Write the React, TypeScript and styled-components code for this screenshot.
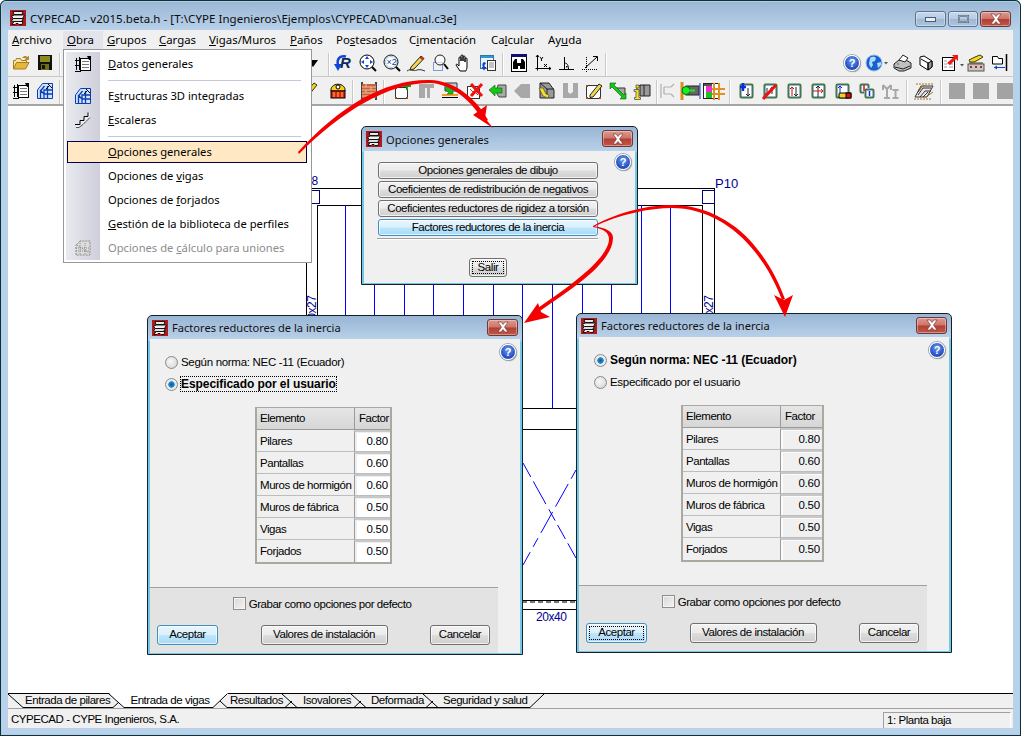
import React from "react";
import styled, { createGlobalStyle } from "styled-components";

const Global = createGlobalStyle`
  html, body { margin: 0; padding: 0; background: #fff; }
  #root { width: 1021px; height: 736px; overflow: hidden; }
`;

const SANS = `"Liberation Sans", Arial, sans-serif`;
const UI = `"Noto Sans", "Open Sans", sans-serif`;

const Win = styled.div`
  position: relative;
  width: 1021px;
  height: 736px;
  box-sizing: border-box;
  display: flex;
  flex-direction: column;
  padding: 0 8px 8px;
  overflow: hidden;
  border-radius: 6px 6px 0 0;
  background: linear-gradient(#99b6d4 0, #b9d1ea 30px, #b9d1ea 100%);
  box-shadow: inset 0 0 0 1px #1b2a33, inset 0 0 0 2px #9fd6ec;
  font: 11.5px ${SANS};
  letter-spacing: -0.45px;
  color: #000;
`;

const TitleBar = styled.div`
  height: 30px;
  flex: none;
  display: flex;
  align-items: flex-end;
  padding: 0 2px 4px 2px;
  box-sizing: border-box;
`;

const AppTitle = styled.span`
  font: 11.5px ${UI};
  line-height: 18px;
  margin: 0 0 -2px 4px;
  color: #0c0c0c;
  letter-spacing: 0.05px;
`;

const WinButtons = styled.div`
  margin: 0 0 -1px auto;
  display: flex;
  gap: 2px;
`;

const WinButton = styled.div<{ $close?: boolean; $w: number }>`
  width: ${(p) => p.$w}px;
  height: 16px;
  box-sizing: border-box;
  border-radius: 3px;
  border: 1px solid ${(p) => (p.$close ? "#6b3a38" : "#5e7288")};
  box-shadow: inset 0 0 0 1px rgba(255, 255, 255, 0.35);
  background: ${(p) =>
    p.$close
      ? "linear-gradient(#dc9a90 0, #cf7468 48%, #b23f33 52%, #c0584a 100%)"
      : "linear-gradient(#c6d8ec 0, #b6cbe2 48%, #9db8d6 52%, #aac4df 100%)"};
  display: flex;
  align-items: center;
  justify-content: center;
`;

const MenuBar = styled.div`
  height: 23px;
  flex: none;
  background: #f0f0f0;
  display: flex;
  align-items: flex-start;
  font: 11.4px ${UI};
  letter-spacing: 0;
`;

const MenuEntry = styled.div<{ $x: number; $open?: boolean }>`
  width: ${(p) => p.$x}px;
  height: 19px;
  margin-top: 1px;
  line-height: 18px;
  padding-left: 4px;
  box-sizing: border-box;
  white-space: nowrap;
  background: ${(p) => (p.$open ? "#e3e3ec" : "transparent")};
`;

const Key = styled.span`
  text-decoration: underline;
`;

const Toolbar = styled.div<{ $h: number; $pt: number; $line?: boolean }>`
  height: ${(p) => p.$h}px;
  flex: none;
  box-sizing: border-box;
  padding: ${(p) => p.$pt}px 0 0 1px;
  background: #f0f0f0;
  display: flex;
  align-items: flex-start;
  overflow: hidden;
  border-bottom: ${(p) => (p.$line ? "2px solid #a5a5a5" : "1px solid #c8c8c8")};
`;

const Sep = styled.div`
  flex: none;
  width: 1px;
  height: 24px;
  margin: -2px 2px 0;
  background: #c9c9c9;
  border-right: 1px solid #fff;
`;

const Space = styled.div<{ $w: number }>`
  flex: none;
  width: ${(p) => p.$w}px;
`;

const PushRight = styled.div`
  margin-left: auto;
  display: flex;
  align-items: flex-start;
  padding-right: 1px;
`;

const Svg = styled.svg`
  flex: none;
  display: block;
  overflow: visible;
`;

const Canvas = styled.div`
  flex: 1;
  background: #fff;
  min-height: 0;
`;

const TabRow = styled.div`
  height: 14px;
  flex: none;
  background: #f0f0f0;
  border-top: 1px solid #000;
  display: flex;
  align-items: flex-start;
  box-sizing: content-box;
  margin-top: 0;
`;

const Tab = styled.div<{ $active?: boolean; $w: number }>`
  width: ${(p) => p.$w}px;
  height: ${(p) => (p.$active ? 15 : 14)}px;
  line-height: ${(p) => (p.$active ? 15 : 13)}px;
  text-align: center;
  white-space: nowrap;
  box-sizing: border-box;
  border-bottom: 1px solid #000;
  margin-top: ${(p) => (p.$active ? -1 : 0)}px;
  background: ${(p) => (p.$active ? "#fff" : "transparent")};
`;

const StatusBar = styled.div`
  height: 19px;
  flex: none;
  background: #f0f0f0;
  border-top: 1px solid #a0a0a0;
  display: flex;
  align-items: center;
  justify-content: space-between;
  padding: 0 2px 0 3px;
`;

const StatusPanel = styled.div`
  width: 128px;
  height: 16px;
  margin-top: 2px;
  box-sizing: border-box;
  padding-left: 3px;
  line-height: 15px;
  border-left: 1px solid #a0a0a0;
  border-top: 1px solid #a0a0a0;
  border-right: 1px solid #fff;
`;

/* ---------- drop-down menu ---------- */

const Menu = styled.div`
  position: absolute;
  left: 63px;
  top: 49px;
  width: 249px;
  height: 214px;
  box-sizing: border-box;
  padding: 2px;
  background: #fff;
  border: 1px solid #979797;
  font: 11.2px ${UI};
  letter-spacing: 0;
  z-index: 3;
`;

const gutter = `linear-gradient(90deg, #e9e9ef 0, #cfcfdc 100%) 0 0 / 34px 100% no-repeat`;

const MenuItem = styled.div<{ $active?: boolean; $off?: boolean }>`
  position: relative;
  height: 24px;
  display: flex;
  align-items: center;
  background: ${gutter};
  color: ${(p) => (p.$off ? "#8c8c8c" : "#000")};
  white-space: nowrap;
  &::before {
    content: "";
    display: ${(p) => (p.$active ? "block" : "none")};
    position: absolute;
    left: 1px;
    right: 2px;
    top: 1px;
    bottom: 1px;
    background: #ffe8c3;
    border: 1px solid #00004e;
  }
`;

const MenuIcon = styled.div`
  width: 34px;
  flex: none;
  display: flex;
  justify-content: center;
  position: relative;
`;

const MenuLabel = styled.span`
  margin: 0 0 2px 8px;
  position: relative;
`;

const MenuSep = styled.div`
  height: 8px;
  display: flex;
  align-items: center;
  background: ${gutter};
  &::after {
    content: "";
    margin-left: 42px;
    width: 193px;
    height: 1px;
    background: #c6c6dc;
  }
`;

/* ---------- dialogs ---------- */

const Dialog = styled.div<{ $x: number; $y: number; $w: number; $h: number }>`
  position: absolute;
  left: ${(p) => p.$x}px;
  top: ${(p) => p.$y}px;
  width: ${(p) => p.$w}px;
  height: ${(p) => p.$h}px;
  box-sizing: border-box;
  display: flex;
  flex-direction: column;
  border: 1px solid #15202a;
  border-radius: 5px 5px 0 0;
  background: linear-gradient(#99b6d4 0, #b9d1ea 24px, #70c8e6 26px);
  padding: 0 1px 1px;
  z-index: 2;
`;

const DialogTitle = styled.div<{ $h: number }>`
  height: ${(p) => p.$h}px;
  flex: none;
  display: flex;
  align-items: center;
  box-sizing: border-box;
  padding: 0 3px 0 3px;
  font: 11.1px ${UI};
  letter-spacing: 0;
  color: #111;
  & > span {
    margin-left: 4px;
  }
`;

const DialogClose = styled(WinButton)`
  height: 17px;
  margin-left: auto;
  margin-top: -1px;
`;

const DialogBody = styled.div`
  flex: 1;
  position: relative;
  background: #f0f0f0;
  display: flex;
  flex-direction: column;
  min-height: 0;
  margin: 0 1px;
`;

const Help = styled.span`
  flex: none;
  display: block;
  width: 14px;
  height: 14px;
  box-sizing: content-box;
  border-radius: 50%;
  border: 1px solid #fff;
  box-shadow: 0 0 0 1px #9aa4b5, 1px 1px 1px #8a8a8a;
  background: radial-gradient(circle at 50% 35%, #6d9cec 0, #2a56c8 60%, #173ea8 100%);
  color: #fff;
  font: bold 11px/14px ${SANS};
  letter-spacing: 0;
  text-align: center;
`;

const HelpSpot = styled.div<{ $r: number; $t: number }>`
  position: absolute;
  right: ${(p) => p.$r}px;
  top: ${(p) => p.$t}px;
`;

const ToolHelp = styled(Help)`
  margin: 1px 4px 0;
`;

const Button = styled.div<{ $w?: number; $blue?: boolean; $focus?: boolean; $h?: number }>`
  position: relative;
  width: ${(p) => (p.$w ? `${p.$w}px` : "100%")};
  height: ${(p) => p.$h ?? 20}px;
  box-sizing: border-box;
  flex: none;
  border-radius: 3px;
  border: 1px solid ${(p) => (p.$blue ? "#3f8fbf" : "#707070")};
  box-shadow: inset 0 0 0 1px rgba(255, 255, 255, 0.7);
  background: ${(p) =>
    p.$blue
      ? "linear-gradient(#eaf6fd 0, #d9f0fc 48%, #bee6fd 52%, #a7d9f5 100%)"
      : "linear-gradient(#f2f2f2 0, #ebebeb 48%, #dddddd 52%, #cfcfcf 100%)"};
  text-align: center;
  line-height: ${(p) => (p.$h ?? 20) - 3}px;
  white-space: nowrap;
  ${(p) =>
    p.$focus
      ? `&::after { content: ""; position: absolute; inset: 2px; border: 1px dotted #000; }`
      : ""}
`;

const OptionStack = styled.div`
  display: flex;
  flex-direction: column;
  gap: 2px;
  width: 220px;
  margin: 11px 0 0 14px;
`;

const OptionRule = styled.div`
  width: 221px;
  height: 1px;
  margin: 2px 0 0 13px;
  background: #a0a0a0;
  border-bottom: 1px solid #fff;
`;

const ExitRow = styled.div`
  display: flex;
  margin: 18px 0 0 105px;
`;

const RadioRow = styled.div<{ $first?: boolean }>`
  display: flex;
  align-items: center;
  height: 22px;
  margin: ${(p) => (p.$first ? "12px" : "0")} 0 0 15px;
`;

const Radio = styled.span<{ $on?: boolean }>`
  width: 11px;
  height: 11px;
  border-radius: 50%;
  border: 1px solid #8a8a8a;
  flex: none;
  background: ${(p) =>
    p.$on
      ? "radial-gradient(circle, #0a5a9a 0, #2a8fd0 38%, #e8edf2 45%, #e8e8e8 100%)"
      : "radial-gradient(circle at 40% 40%, #f8f8f8 0, #cfcfcf 100%)"};
`;

const RadioLabel = styled.span<{ $on?: boolean; $focus?: boolean }>`
  margin-left: 3px;
  font-size: ${(p) => (p.$on ? 12 : 11.5)}px;
  font-weight: ${(p) => (p.$on ? 700 : 400)};
  letter-spacing: ${(p) => (p.$on ? "-0.07px" : "-0.3px")};
  line-height: 14px;
  outline: ${(p) => (p.$focus ? "1px dotted #000" : "none")};
`;

const Table = styled.div<{ $w: number; $ml: number }>`
  display: grid;
  grid-template-columns: 97px 1fr;
  width: ${(p) => p.$w}px;
  margin: 12px 0 0 ${(p) => p.$ml}px;
  box-sizing: border-box;
  border: 1px solid #a9a99f;
  border-width: 1px 2px 2px 2px;
`;

const HeadCell = styled.div<{ $last?: boolean }>`
  height: 22px;
  box-sizing: border-box;
  padding-left: ${(p) => (p.$last ? 4 : 3)}px;
  line-height: 21px;
  white-space: nowrap;
  background: linear-gradient(#e6e6e6, #d6d6d6);
  border-bottom: 1px solid #9a9a9a;
  border-left: ${(p) => (p.$last ? "1px solid #9a9a9a" : "none")};
`;

const NameCell = styled.div`
  height: 22px;
  box-sizing: border-box;
  padding-left: 3px;
  line-height: 23px;
  white-space: nowrap;
  border-bottom: 1px solid #bdbdbd;
  &:nth-last-child(2) {
    border-bottom: none;
  }
`;

const ValueCell = styled.div<{ $off?: boolean }>`
  height: 22px;
  box-sizing: border-box;
  border-left: 1px solid #9a9a9a;
  padding-right: 2px;
  text-align: right;
  line-height: 18px;
  letter-spacing: -0.2px;
  background: ${(p) => (p.$off ? "#f0f0f0" : "#fff")};
  border-top: 2px solid #c8c8c8;
  box-shadow: inset 2px 1px 0 ${(p) => (p.$off ? "#fbfbfb" : "#eee")};
  border-bottom: 1px solid #bdbdbd;
  &:last-child {
    border-bottom: none;
  }
`;

const Footer = styled.div`
  width: 348px;
  height: 66px;
  margin-top: auto;
  box-sizing: border-box;
  background: #e3e3e3;
  border-top: 1px solid #a0a0a0;
  padding: 9px 8px 0 7px;
`;

const CheckRow = styled.div`
  display: flex;
  justify-content: center;
  align-items: center;
  height: 13px;
  gap: 3px;
  margin-left: -3px;
`;

const Check = styled.span`
  width: 11px;
  height: 11px;
  border: 1px solid #8e8f8f;
  background: linear-gradient(135deg, #d8d8d8, #f4f4f4);
  box-shadow: inset 0 0 0 1px #f4f4f4;
`;

const FooterButtons = styled.div`
  display: flex;
  justify-content: space-between;
  margin-top: 15px;
`;

/* ---------- overlay of arrows ---------- */

const ArrowLayer = styled.svg`
  position: absolute;
  left: 0;
  top: 0;
  width: 1021px;
  height: 736px;
  pointer-events: none;
  z-index: 4;
`;

/* ---------- icon drawings ---------- */

const Ring = ({ children }: { children?: React.ReactNode }) => (
  <>
    <rect x="5" y="1" width="15" height="16" fill="#f4f4a0" />
    <rect x="6.500" y="2.500" width="12" height="13" rx="1" fill="#fff" stroke="#3f7272" strokeWidth="2" />
    {children}
  </>
);

const I: Record<string, React.ReactNode> = {
  open: (
    <>
      <path d="M4.500 15V6.500h2l1-2h4l1 2h5V9" fill="#f5e3a0" stroke="#a67c1c" />
      <path d="M4.500 15l3-6.500H20L16.500 15z" fill="#e6b73c" stroke="#a67c1c" />
      <path d="M13 4c2-2.500 4-2.500 5.500-1L20 1.500V6h-4.500L17 4.500c-1-1-2.500-.5-4-.5z" fill="#b08a2c" />
    </>
  ),
  save: (
    <>
      <rect x="5" y="1" width="14" height="15" fill="#111" />
      <rect x="7" y="2" width="10" height="6" fill="#8a8a1c" />
      <rect x="8" y="10" width="8" height="6" fill="#6e6e10" />
      <rect x="9" y="11" width="3" height="4" fill="#111" />
    </>
  ),
  datos: (
    <>
      <path d="M5.500 3v12M8.500 2v13M4 16.500h6M4 5.500h5M4 10.500h5" stroke="#000" fill="none" />
      <rect x="9.500" y="3.500" width="10" height="12" fill="#fff" stroke="#000" />
      <path d="M11 6.500h7M11 9.500h7M11 12.500h7" stroke="#777" />
      <path d="M16 1h4v4h-2z" fill="#000" />
    </>
  ),
  struct: (
    <>
      <path d="M4.500 16.500V8l5-6.500h10v15z" fill="#cde6fb" stroke="#0c3cb4" />
      <path d="M7.500 16V9l4-5M11 16V8h8M14.500 4v12M11.500 12h8M7 8l4 4" stroke="#0c3cb4" fill="none" strokeWidth="1.300" />
      <path d="M15 2l4 4M13 7l4-4" stroke="#000" />
    </>
  ),
  stairs: (
    <>
      <path d="M5 16v-3h4v-4h4V5h4V2h2v4l-4 4-4 3-4 3z" fill="#eee" />
      <path d="M4 13.500h5v-4h4v-4h4v-4" fill="none" stroke="#000" />
      <path d="M5 16.500h3l4-3 3-3 4-4" fill="none" stroke="#555" />
    </>
  ),
  uniones: (
    <>
      <path d="M5 16V6l4-4h10v14z" fill="#ddd" stroke="#888" strokeDasharray="2 1" />
      <path d="M5 9h14M5 12h14M9 2v14M14 4v12M6 6l12 8" stroke="#888" strokeDasharray="1 1" fill="none" />
    </>
  ),
  drop: <path d="M5 6h11l-5 7z" fill="#000" />,
  rzoom: (
    <>
      <path d="M14 2.500C8 1 4.500 5 6 11" stroke="#0c46d8" strokeWidth="2.500" fill="none" />
      <path d="M2 10h8L6 17z" fill="#0c46d8" />
      <text x="8" y="14" fontFamily={SANS} fontSize="15" fontWeight="700" fontStyle="italic" letterSpacing="0" fill="#102a60">
        R
      </text>
    </>
  ),
  zall: (
    <>
      <circle cx="11" cy="8" r="7" fill="#fff" stroke="#000" />
      <path d="M11 2l-2 3h4zM11 14l-2-3h4zM5 8l3-2v4zM17 8l-3-2v4z" fill="#0c46d8" />
      <path d="M16 13l4 4" stroke="#000" strokeWidth="2" />
    </>
  ),
  z2: (
    <>
      <circle cx="11" cy="8" r="7" fill="#fff" stroke="#111" />
      <circle cx="11" cy="8" r="5.500" fill="none" stroke="#9ed0e8" />
      <text x="6.500" y="11" fontFamily={SANS} fontSize="9" letterSpacing="0" fill="#1c3c8c">
        ×2
      </text>
      <path d="M16 13l4 4" stroke="#000" strokeWidth="2" />
    </>
  ),
  pencil: (
    <>
      <path d="M7 13L17 2l3 2.500L10 15l-4 1z" fill="#f2d84a" stroke="#222" />
      <path d="M3 17c4-3 6 1 10-1 3-1 5 0 8 1" fill="none" stroke="#333" />
      <path d="M16 3l3 2.500" stroke="#d03020" strokeWidth="2" />
    </>
  ),
  zwin: (
    <>
      <rect x="5.500" y="8.500" width="9" height="8" fill="none" stroke="#0c46d8" strokeDasharray="1 1" />
      <circle cx="12" cy="6" r="5" fill="#fff" fillOpacity=".6" stroke="#222" />
      <path d="M16 10l4 5" stroke="#000" strokeWidth="2" />
    </>
  ),
  hand: (
    <path
      d="M8 17c-1-2-3-4-4-6 0-1 1-1 2 0l1 1V4c0-1.500 2-1.500 2 0v3-5c0-1.500 2-1.500 2 0v5-4c0-1.500 2-1.500 2 0v5-3c0-1.500 2-1.500 2 0v8c0 2-1 3-1 4z"
      fill="#fff"
      stroke="#000"
    />
  ),
  copy: (
    <>
      <rect x="4.500" y="1.500" width="13" height="13" fill="#e8f6fb" stroke="#3a6ea8" />
      <rect x="5" y="2" width="12" height="2" fill="#2a9ad8" />
      <rect x="11.500" y="6.500" width="8" height="10" fill="#fff" stroke="#333" />
      <path d="M13 9h5M13 11h5M13 13h5" stroke="#888" />
      <path d="M9 8c-3 0-3 3-2 5l-1.500 0L8 16.500l2.500-3.500H9c-1-2-.5-3 1-3z" fill="#0c46d8" />
    </>
  ),
  binoc: (
    <>
      <rect x="4.500" y="0.500" width="15" height="17" fill="#fff" stroke="#000" />
      <rect x="4" y="0" width="16" height="3" fill="#10106e" />
      <path d="M6 15V8l2-3h2v4h4V5h2l2 3v7h-5v-3h-2v3z" fill="#000" />
    </>
  ),
  axes: (
    <>
      <path d="M6.500 1v13.500H20M5 3l1.500-2L8 3M18 13l2 1.500-2 1.500M4.500 14.500h2v2" stroke="#000" fill="none" />
      <path d="M9 3l1.500 2L12 3M10.500 5v2M13 10l3 3M16 10l-3 3" stroke="#000" fill="none" />
    </>
  ),
  angle: (
    <>
      <path d="M9.500 3v12M4 15.500h15" stroke="#000" fill="none" />
      <path d="M9.500 9c2.500 0 4 2 4 6" stroke="#000" fill="none" />
      <rect x="11" y="12" width="1.500" height="1.500" fill="#000" />
    </>
  ),
  diag: (
    <>
      <path d="M3 15.500h16M7.500 3v16" stroke="#000" strokeDasharray="1 1" fill="none" />
      <path d="M6 14L18 3M14 2.500h4.500V7" stroke="#000" fill="none" />
    </>
  ),
  globe: (
    <>
      <circle cx="9" cy="9" r="8" fill="#1a5fd0" stroke="#9ab8e0" />
      <path d="M5 4c3-2 5-1 6 0l-1 3-3 1 1 3-2 3-2-4zM12 9l4-1v3l-3 3z" fill="#a8dcf8" />
      <path d="M19 8h4l-2 2.500z" fill="#555" />
    </>
  ),
  printer: (
    <>
      <path d="M4 10l5-4h7l5 3v5l-7 3H9l-5-3z" fill="#c0c0c0" stroke="#222" />
      <path d="M9 6l4-5 5 3-3 4z" fill="#fff" stroke="#222" />
      <path d="M5 13l8 2 7-3" stroke="#222" fill="none" />
      <path d="M7 10h2" stroke="#2a8a2a" />
    </>
  ),
  plot: (
    <>
      <path d="M6 3l4-1 8 5v6l-4 3-8-5z" fill="#fff" stroke="#000" />
      <path d="M14 9l4-2v6l-4 3z" fill="#999" stroke="#000" />
      <path d="M7 5l7 4v7" stroke="#000" fill="none" />
    </>
  ),
  export: (
    <>
      <rect x="4.500" y="3.500" width="12" height="13" fill="#fff" stroke="#000" />
      <path d="M6 7h3M6 10h3M6 13h3M11 10h4M11 13h4" stroke="#999" />
      <path d="M9 9l7-6-2-2h6v6l-2-2-6 6z" fill="#f01818" />
      <path d="M22 10h4l-2 2.500z" fill="#555" />
    </>
  ),
  handbox: (
    <>
      <rect x="4" y="10" width="16" height="7" fill="#c8c8c8" stroke="#555" />
      <path d="M6 13h2M11 13h2M16 13h2" stroke="#c02020" strokeWidth="2" />
      <path d="M5 6l6-3 5-2 3 2-5 3-4 2H6z" fill="#f6d820" stroke="#3a3a10" />
      <path d="M5 9h14" stroke="#3a3a10" />
    </>
  ),
  exit: (
    <>
      <path d="M4.500 8V2.500h5l1 2h4V10h-10z" fill="#fff" stroke="#000" />
      <path d="M18.500 0v17" stroke="#000" strokeWidth="1.500" />
      <path d="M6 13.500h11" stroke="#0c46d8" />
      <path d="M6 13.500l3-2v4z" fill="#0c46d8" />
    </>
  ),
  pen: (
    <>
      <path d="M1 15l2-4L12 1l3 2-9 11z" fill="#f2d020" stroke="#332" />
      <path d="M-4 8l5 9" stroke="#222" />
    </>
  ),
  phone: (
    <>
      <path d="M5 9c-1-9 15-9 14 0z" fill="#f8d020" stroke="#000" />
      <rect x="5" y="9" width="14" height="7" fill="#e02020" stroke="#000" />
      <path d="M8 10v5M12 10v5M16 10v5" stroke="#f8d020" />
      <circle cx="12" cy="5" r="2" fill="#fff" stroke="#000" />
    </>
  ),
  brick: (
    <>
      <path d="M5 0v18M19 0v18" stroke="#444" strokeWidth="2" />
      <rect x="5" y="2" width="14" height="14" fill="#c8643c" />
      <path d="M5 5h14M5 8h14M5 11h14M5 14h14M9 2v3M14 5v3M9 8v3M14 11v3" stroke="#f0c0a0" />
    </>
  ),
  addbox: (
    <>
      <rect x="5.500" y="5.500" width="12" height="11" fill="#fff" stroke="#333" />
      <path d="M5 5h2v2H5zM16 5h2v2h-2zM5 15h2v2H5zM16 15h2v2h-2z" fill="#a05020" />
      <path d="M13 4h8M17 0v8" stroke="#10a010" strokeWidth="2" />
    </>
  ),
  pi: <path d="M5 2h15v4h-4v10h-3V6h-2v10H5z" fill="#a8a8a8" />,
  down: (
    <>
      <path d="M7 1h12v8H7z" fill="#ccc" stroke="#333" />
      <path d="M4 13h16" stroke="#f0a020" strokeWidth="2" />
      <path d="M4 15.500h16" stroke="#000" />
      <path d="M9 3l5 5 1-2v6H9l2-1-4-4z" fill="#10c010" stroke="#063" strokeWidth=".5" />
    </>
  ),
  delbox: (
    <>
      <rect x="5.500" y="4.500" width="12" height="12" fill="#fff" stroke="#333" />
      <path d="M8 7l5 5M12 9l4 4" stroke="#a05020" />
      <path d="M9 2l11 12M20 2L9 14" stroke="#f01010" strokeWidth="3" />
    </>
  ),
  greenleft: (
    <>
      <path d="M12 3h8v12h-7l-2-3V7z" fill="#aaa" stroke="#444" />
      <path d="M3 8l6-5v3h7v5H9v3z" fill="#14c814" stroke="#0a600a" strokeWidth=".6" />
    </>
  ),
  grayleft: <path d="M4 9l7-7h9v14h-9z" fill="#a8a8a8" />,
  beam: (
    <>
      <path d="M6 1h9l5 7v8H6z" fill="#999" stroke="#222" />
      <path d="M6 1l7 6v9M13 7h7" stroke="#222" fill="none" />
      <path d="M5 6h4l3 6 3 1-1 3-5-2z" fill="#f8e020" stroke="#554" strokeWidth=".7" />
    </>
  ),
  notch: <path d="M5 1h5v9l2 2 3-2V1h5v15H5z" fill="#a8a8a8" />,
  editbox: (
    <>
      <rect x="4.500" y="3.500" width="14" height="13" fill="#fff" stroke="#333" />
      <path d="M4 3h2v2H4zM17 3h2v2h-2zM4 15h2v2H4zM17 15h2v2h-2z" fill="#a05020" />
      <path d="M8 13L17 2l3 2-9 11-3 .5z" fill="#f2d84a" stroke="#222" />
    </>
  ),
  greendiag: (
    <>
      <path d="M9 6h10v8h-3z" fill="#aaa" stroke="#333" />
      <path d="M4 1h6L8 3l10 10 2-2v6h-6l2-2L6 5 4 7z" fill="#14c814" stroke="#0a600a" strokeWidth=".6" />
    </>
  ),
  info: (
    <>
      <path d="M10 3h10v11H10z" fill="#999" stroke="#222" />
      <path d="M10 3l-3 3v2M14 3v11" stroke="#222" fill="none" />
      <path d="M6 3h3v3H6zM4 7.500h5v8h1.500v2h-6v-2H6v-6H4z" fill="#f8e020" stroke="#444" strokeWidth=".7" />
    </>
  ),
  bracket: (
    <path d="M5 2v14M8 5h7M8 12h7M8 5v7M18 2l-3 3M18 15l-3-3" stroke="#b0b0b0" strokeWidth="1.200" fill="none" />
  ),
  greennode: (
    <>
      <path d="M4 0v18" stroke="#d89018" strokeWidth="3" />
      <rect x="8" y="4" width="13" height="9" fill="#666" stroke="#222" />
      <circle cx="8" cy="8.500" r="4" fill="#18f018" stroke="#063" />
      <path d="M9 8.500h8" stroke="#18f018" strokeWidth="2" />
      <path d="M22 1v16" stroke="#0c46d8" />
    </>
  ),
  grid: (
    <>
      <rect x="1.500" y="1.500" width="15" height="15" fill="#fff" stroke="#222" />
      <rect x="2" y="2" width="8" height="2" fill="#555" />
      <rect x="4" y="4" width="6" height="6" fill="#f030d0" />
      <rect x="4" y="10" width="6" height="6" fill="#20c020" />
      <path d="M12 1v17M17 1v17M10 7h13M10 12h13" stroke="#e09020" strokeWidth="2" />
    </>
  ),
  n1: (
    <Ring>
      <path d="M6 5h6M9 1v8" stroke="#0c2ce0" strokeWidth="2.500" />
      <path d="M14 6v8M12 12l2 2 2-2" stroke="#222" fill="none" />
    </Ring>
  ),
  n2: (
    <Ring>
      <path d="M9 6v7M14 5v7M12.500 7l1.500-2 1.500 2M7.500 11l1.500 2 1.500-2" stroke="#223" fill="none" />
      <path d="M18 3L5 17" stroke="#f01010" strokeWidth="3" />
    </Ring>
  ),
  n3: (
    <Ring>
      <path d="M10 5v9M8 7l2-2 2 2" stroke="#c01010" fill="none" />
      <path d="M14 5v9M12 12l2 2 2-2" stroke="#223" fill="none" />
    </Ring>
  ),
  n4: (
    <Ring>
      <path d="M12 4v11M10 6l2-2 2 2" stroke="#223" fill="none" />
      <path d="M7 9h10M15 7l2 2-2 2" stroke="#e01010" fill="none" />
    </Ring>
  ),
  n5: (
    <Ring>
      <path d="M10 4v8M8 6l2-2 2 2" stroke="#0c2ce0" fill="none" />
      <rect x="9" y="11" width="12" height="5" rx="1" fill="#f8d020" stroke="#000" />
      <rect x="16" y="11" width="5" height="5" fill="#e01010" stroke="#000" />
    </Ring>
  ),
  n6: (
    <>
      <rect x="5" y="1" width="10" height="11" fill="#f4f4a0" />
      <rect x="6.500" y="2.500" width="8" height="8" rx="1" fill="#fff" stroke="#3f7272" strokeWidth="2" />
      <rect x="10" y="6" width="10" height="11" fill="#f4f4a0" />
      <rect x="11.500" y="7.500" width="8" height="8" rx="1" fill="#fff" stroke="#3f7272" strokeWidth="2" />
      <path d="M10 3v6" stroke="#e01010" strokeWidth="1.500" />
      <path d="M15.500 9v5" stroke="#0c2ce0" strokeWidth="1.500" />
    </>
  ),
  n7: (
    <>
      <path d="M5 3l4 4 4-4M9 7v9M6 16h6M5 3v5M13 3v5" stroke="#a8a8a8" strokeWidth="2" fill="none" />
      <path d="M14.500 8h6M14.500 16h6M17.500 8v8" stroke="#a8a8a8" strokeWidth="2" fill="none" />
    </>
  ),
  hatch: (
    <>
      <path d="M3 15l6-11h12l-6 11z" fill="#e8e8e8" stroke="#333" />
      <path d="M6 13L11 6h8M6 10l3-4M8 15l5-6h6M11 15l5-5" stroke="#333" fill="none" />
      <path d="M4 2h17M2 17h17" stroke="#a8701c" strokeDasharray="2 1" />
      <path d="M6 8l7-5M14 15l7-5" stroke="#a8701c" />
    </>
  ),
  square: <rect x="4" y="1" width="16" height="16" fill="#a3a3a3" />,
};

const Tool = ({ n, w = 24 }: { n: string; w?: number }) => (
  <Svg width={w} height={18} viewBox={`${12 - w / 2} 0 ${w} 18`}>
    {I[n]}
  </Svg>
);

const Logo = () => (
  <Svg width={16} height={16} viewBox="0 0 16 16">
    <rect width="16" height="16" fill="#b3191b" />
    <path d="M3 1.500h10l-1 3H4z" fill="#e8e8e8" stroke="#111" />
    <path d="M1.500 6l3-1h10l-2 3.500H3z" fill="#f0f0f0" stroke="#111" />
    <path d="M1.500 10.500l2-2h10l-2 3H3z" fill="#dcdcdc" stroke="#111" />
    <path d="M2 14.500l2-3h9l-1 3H9l-1-1H6l-1 1z" fill="#f0f0f0" stroke="#111" />
  </Svg>
);

const CloseGlyph = () => (
  <Svg width={14} height={10} viewBox="0 0 14 10">
    <path d="M2 0h3l2 2.500L9 0h3L8.500 5 12 10H9L7 7.500 5 10H2l3.500-5z" fill="#fff" stroke="#6a2a28" strokeWidth=".6" />
  </Svg>
);

const MinGlyph = () => (
  <Svg width={11} height={5} viewBox="0 0 11 5">
    <rect x=".5" y=".5" width="10" height="4" fill="#e8eef6" stroke="#4a5c70" />
  </Svg>
);

const MaxGlyph = () => (
  <Svg width={11} height={8} viewBox="0 0 11 8">
    <rect x="1" y="1" width="9" height="6" fill="none" stroke="#4a5c70" strokeWidth="2" />
    <rect x="1" y="1" width="9" height="6" fill="none" stroke="#eef3f8" strokeWidth=".6" />
  </Svg>
);

/* ---------- the drawing on the canvas ---------- */

const BLUE_X = [345, 374, 404, 433, 463, 493, 522, 552, 582, 611, 641, 670];

const Plan = () => (
  <Svg width={1005} height={588} viewBox="8 106 1005 588" shapeRendering="crispEdges">
    <g stroke="#000" fill="none">
      <path d="M300 188.500H715M317 205.500H702.500" />
      <path d="M306.500 262V321M317.500 205V321M702.500 205V313M714.500 188V313" />
      <path d="M522 408.500H577M522 429.500H577M522 600.500H577M522 609.500H577" />
    </g>
    <path d="M522 602H577" stroke="#777" strokeWidth="2" strokeDasharray="5 3" />
    <g stroke="#0000ff">
      {BLUE_X.map((x) => (
        <path key={x} d={`M${x + 0.5} 205V408`} />
      ))}
    </g>
    <g stroke="#0000ff" fill="none" shapeRendering="auto">
      <path d="M523 463L576 558" strokeDasharray="16 5 26 6 13 5" />
      <path d="M576 470L523 565" strokeDasharray="10 6 26 6 24 6" />
    </g>
    <rect x="311.500" y="190.500" width="8" height="13" fill="#fff" stroke="#000080" />
    <rect x="702.500" y="190.500" width="12" height="13" fill="#fff" stroke="#000080" />
    <g fill="#000090" fontFamily={SANS} fontSize="12" shapeRendering="auto">
      <text x="304" y="185">P8</text>
      <text x="715" y="188" fontSize="13" letterSpacing="0">P10</text>
      <text x="536" y="621">20x40</text>
      <text transform="translate(316 326) rotate(-90)">20x27</text>
      <text transform="translate(713 326) rotate(-90)">20x27</text>
    </g>
  </Svg>
);

/* ---------- arrows ---------- */

const Arrows = () => (
  <ArrowLayer viewBox="0 0 1021 736">
    <g fill="#f40000">
      <path d="M298 152C340 106 385 79 430 80C455 81 476 98 488 120L484 122C472 101 452 84 430 83C388 83 342 111 299 154Z" />
      <path d="M493 128L473 115L487 105L485 118Z" />
      <path d="M593 226C606 228 613 231 613 238C613 252 598 268 583 280C568 292 552 302 537 313L535 310C550 299 566 289 580 277C595 265 609 250 609 239C609 233 604 229 593 227Z" />
      <path d="M524 323L538 303L541 312L550 317Z" />
      <path d="M593 227C620 214 650 208 672 208C705 208 735 226 755 252C768 268 776 285 782 300L785 299C779 283 771 266 758 250C738 223 706 205 672 205C650 205 620 211 593 226Z" />
      <path d="M785 317L774 295L784 300L793 295Z" />
    </g>
  </ArrowLayer>
);

/* ---------- data ---------- */

const ROWS: [string, string][] = [
  ["Pilares", "0.80"],
  ["Pantallas", "0.60"],
  ["Muros de hormigón", "0.60"],
  ["Muros de fábrica", "0.50"],
  ["Vigas", "0.50"],
  ["Forjados", "0.50"],
];

const WinClose = () => (
  <DialogClose $close $w={31}>
    <CloseGlyph />
  </DialogClose>
);

const Inertia = ({ x, y, byUser }: { x: number; y: number; byUser: boolean }) => (
  <Dialog $x={x} $y={y} $w={376} $h={340}>
    <DialogTitle $h={23}>
      <Logo />
      <span>Factores reductores de la inercia</span>
      <WinClose />
    </DialogTitle>
    <DialogBody>
      <HelpSpot $r={4} $t={5}>
        <Help>?</Help>
      </HelpSpot>
      <RadioRow $first>
        <Radio $on={!byUser} />
        <RadioLabel $on={!byUser}>Según norma: NEC -11 (Ecuador)</RadioLabel>
      </RadioRow>
      <RadioRow>
        <Radio $on={byUser} />
        <RadioLabel $on={byUser} $focus={byUser}>
          Especificado por el usuario
        </RadioLabel>
      </RadioRow>
      <Table $w={byUser ? 137 : 143} $ml={byUser ? 105 : 102}>
        <HeadCell>Elemento</HeadCell>
        <HeadCell $last>Factor</HeadCell>
        {ROWS.map(([name, value]) => (
          <React.Fragment key={name}>
            <NameCell>{name}</NameCell>
            <ValueCell $off={!byUser}>{value}</ValueCell>
          </React.Fragment>
        ))}
      </Table>
      <Footer>
        <CheckRow>
          <Check />
          <span>Grabar como opciones por defecto</span>
        </CheckRow>
        <FooterButtons>
          <Button $w={61} $blue $focus={!byUser}>
            Aceptar
          </Button>
          <Button $w={127}>Valores de instalación</Button>
          <Button $w={60}>Cancelar</Button>
        </FooterButtons>
      </Footer>
    </DialogBody>
  </Dialog>
);

const MENUS: [number, React.ReactNode][] = [
  [55, <><Key>A</Key>rchivo</>],
  [40, <><Key>O</Key>bra</>],
  [52, <><Key>G</Key>rupos</>],
  [50, <><Key>C</Key>argas</>],
  [81, <><Key>V</Key>igas/Muros</>],
  [46, <><Key>P</Key>años</>],
  [73, <>Po<Key>s</Key>tesados</>],
  [82, <>C<Key>i</Key>mentación</>],
  [57, <>Ca<Key>l</Key>cular</>],
  [60, <>Ay<Key>u</Key>da</>],
];

const SLANT_NEXT = "M0 13.500H21";
const SLANT_CROSS = "M0 0L15 13.500M3 13.500L10 7";

export default function App() {
  return (
    <>
      <Global />
      <Win>
        <TitleBar>
          <Logo />
          <AppTitle>CYPECAD - v2015.beta.h - [T:\CYPE Ingenieros\Ejemplos\CYPECAD\manual.c3e]</AppTitle>
          <WinButtons>
            <WinButton $w={31}><MinGlyph /></WinButton>
            <WinButton $w={30}><MaxGlyph /></WinButton>
            <WinButton $close $w={31}><CloseGlyph /></WinButton>
          </WinButtons>
        </TitleBar>

        <MenuBar>
          {MENUS.map(([w, label], i) => (
            <MenuEntry key={i} $x={w} $open={i === 1}>
              {label}
            </MenuEntry>
          ))}
        </MenuBar>

        <Toolbar $h={24} $pt={1}>
          <Tool n="open" />
          <Tool n="save" />
          <Sep />
          <Space $w={239} />
          <Tool n="drop" />
          <Sep />
          {["rzoom", "zall", "z2", "pencil", "zwin", "hand", "copy"].map((n) => (
            <Tool key={n} n={n} />
          ))}
          <Sep />
          <Space $w={1} />
          {["binoc", "axes", "angle", "diag"].map((n) => (
            <Tool key={n} n={n} />
          ))}
          <Sep />
          <PushRight>
            <ToolHelp>?</ToolHelp>
            <Tool n="globe" w={26} />
            <Tool n="printer" />
            <Tool n="plot" />
            <Tool n="export" />
            <Space $w={2} />
            <Tool n="handbox" />
            <Tool n="exit" />
          </PushRight>
        </Toolbar>

        <Toolbar $h={29} $pt={5} $line>
          <Tool n="datos" />
          <Tool n="struct" />
          <Sep />
          <Space $w={239} />
          <Tool n="pen" />
          <Tool n="phone" />
          <Sep />
          <Space $w={1} />
          <Tool n="brick" />
          <Sep />
          <Space $w={3} />
          {["addbox", "pi", "down", "delbox", "greenleft", "grayleft", "beam", "notch", "editbox", "greendiag", "info"].map((n) => (
            <Tool key={n} n={n} />
          ))}
          <Sep />
          <Tool n="bracket" w={16} />
          <Tool n="greennode" w={28} />
          <Tool n="grid" w={20} />
          <Space $w={3} />
          <Sep />
          <Space $w={1} />
          {["n1", "n2", "n3", "n4", "n5", "n6", "n7"].map((n) => (
            <Tool key={n} n={n} />
          ))}
          <Space $w={2} />
          <Sep />
          <Tool n="hatch" w={28} />
          <Sep />
          <Space $w={1} />
          <Tool n="square" />
          <Tool n="square" />
          <Tool n="square" />
        </Toolbar>

        <Canvas>
          <Plan />
        </Canvas>

        <TabRow>
          <Svg width={17} height={14} viewBox="0 0 17 14"><path d="M0 0L15 13.500H17" stroke="#000" fill="none" /></Svg>
          <Tab $w={84}>Entrada de pilares</Tab>
          <Svg width={21} height={14} viewBox="0 0 21 14"><path d="M0 -1H21V15H15z" fill="#fff" /><path d="M0 0L15 13.500H21" stroke="#000" fill="none" /><path d="M0 13.500H4L10 8" stroke="#000" fill="none" /></Svg>
          <Tab $active $w={80}>Entrada de vigas</Tab>
          <Svg width={20} height={14} viewBox="0 0 20 14"><path d="M0 -1H18L4 13.500H0z" fill="#fff" /><path d="M0 13.500H3L17 0" stroke="#000" fill="none" /><path d="M10 7L17 13.500H20" stroke="#000" fill="none" /></Svg>
          <Tab $w={52}>Resultados</Tab>
          <Svg width={21} height={14} viewBox="0 0 21 14"><path d={SLANT_NEXT} stroke="#000" fill="none" /><path d={SLANT_CROSS} stroke="#000" fill="none" /></Svg>
          <Tab $w={48}>Isovalores</Tab>
          <Svg width={20} height={14} viewBox="0 0 20 14"><path d={SLANT_NEXT} stroke="#000" fill="none" /><path d={SLANT_CROSS} stroke="#000" fill="none" /></Svg>
          <Tab $w={52}>Deformada</Tab>
          <Svg width={20} height={14} viewBox="0 0 20 14"><path d={SLANT_NEXT} stroke="#000" fill="none" /><path d={SLANT_CROSS} stroke="#000" fill="none" /></Svg>
          <Tab $w={84}>Seguridad y salud</Tab>
          <Svg width={18} height={14} viewBox="0 0 18 14"><path d="M0 13.500H3L17 0" stroke="#000" fill="none" /></Svg>
        </TabRow>

        <StatusBar>
          <span>CYPECAD - CYPE Ingenieros, S.A.</span>
          <StatusPanel>1: Planta baja</StatusPanel>
        </StatusBar>

        <Menu>
          <MenuItem><MenuIcon><Tool n="datos" /></MenuIcon><MenuLabel><Key>D</Key>atos generales</MenuLabel></MenuItem>
          <MenuSep />
          <MenuItem><MenuIcon><Tool n="struct" /></MenuIcon><MenuLabel>E<Key>s</Key>tructuras 3D integradas</MenuLabel></MenuItem>
          <MenuItem><MenuIcon><Tool n="stairs" /></MenuIcon><MenuLabel><Key>E</Key>scaleras</MenuLabel></MenuItem>
          <MenuSep />
          <MenuItem $active><MenuIcon /><MenuLabel><Key>O</Key>pciones generales</MenuLabel></MenuItem>
          <MenuItem><MenuIcon /><MenuLabel>Opciones de <Key>v</Key>igas</MenuLabel></MenuItem>
          <MenuItem><MenuIcon /><MenuLabel>Opciones de <Key>f</Key>orjados</MenuLabel></MenuItem>
          <MenuItem><MenuIcon /><MenuLabel><Key>G</Key>estión de la biblioteca de perfiles</MenuLabel></MenuItem>
          <MenuItem $off><MenuIcon><Tool n="uniones" /></MenuIcon><MenuLabel>Opciones de <Key>c</Key>álculo para uniones</MenuLabel></MenuItem>
        </Menu>

        <Dialog $x={361} $y={126} $w={277} $h={159}>
          <DialogTitle $h={24}>
            <Logo />
            <span>Opciones generales</span>
            <WinClose />
          </DialogTitle>
          <DialogBody>
            <HelpSpot $r={4} $t={3}>
              <Help>?</Help>
            </HelpSpot>
            <OptionStack>
              <Button $h={17}>Opciones generales de dibujo</Button>
              <Button $h={17}>Coeficientes de redistribución de negativos</Button>
              <Button $h={17}>Coeficientes reductores de rigidez a torsión</Button>
              <Button $h={17} $blue>Factores reductores de la inercia</Button>
            </OptionStack>
            <OptionRule />
            <ExitRow>
              <Button $w={38} $h={19} $focus>Salir</Button>
            </ExitRow>
          </DialogBody>
        </Dialog>

        <Inertia x={147} y={315} byUser />
        <Inertia x={576} y={313} byUser={false} />

        <Arrows />
      </Win>
    </>
  );
}
